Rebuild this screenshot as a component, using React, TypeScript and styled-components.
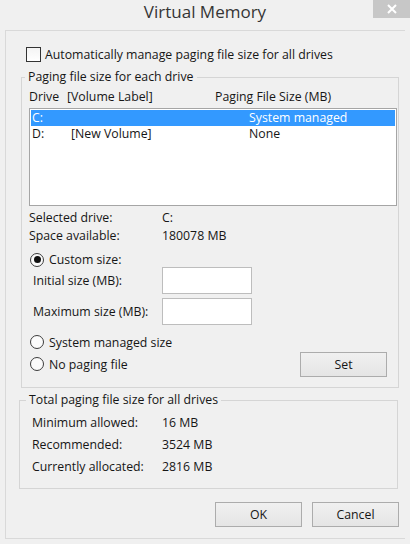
import React from 'react';
import styled, { createGlobalStyle } from 'styled-components';

const GlobalStyle = createGlobalStyle`
  html, body {
    margin: 0;
    padding: 0;
    background: #f0f0f0;
  }
  body {
    font-family: 'Open Sans', 'Noto Sans', sans-serif;
    font-size: 12.3px;
    color: #161616;
  }
  * {
    box-sizing: border-box;
  }
`;

const Window = styled.div`
  width: 410px;
  height: 544px;
  background: #f0f0f0;
  overflow: hidden;
`;

const TitleBar = styled.div`
  height: 30px;
  display: grid;
  grid-template-columns: 1fr auto 1fr;
  align-items: start;
`;

const Title = styled.div`
  grid-column: 2;
  font-size: 17px;
  line-height: 24px;
  color: #353535;
`;

const CloseButton = styled.div`
  grid-column: 3;
  justify-self: end;
  width: 37px;
  height: 18px;
  background: #c7c7c7;
  display: flex;
  align-items: center;
  justify-content: center;
`;

const Client = styled.div`
  margin-left: 5px;
  width: 400px;
  height: 509px;
  border: 1px solid #d9d9d9;
  border-right: none;
  display: flex;
  flex-direction: column;
`;

const CheckRow = styled.label`
  display: flex;
  align-items: center;
  gap: 4px;
  height: 15px;
  margin: 16px 0 0 20px;
  line-height: 15px;
`;

const CheckBox = styled.span`
  width: 15px;
  height: 15px;
  border: 1px solid #333;
  background: linear-gradient(#f4f4f4, #ffffff);
`;

const Group = styled.fieldset<{ $left: number; $width: number; $top: number }>`
  margin: ${({ $top }) => $top}px 0 0 ${({ $left }) => $left}px;
  width: ${({ $width }) => $width}px;
  padding: 0;
  min-inline-size: 0;
  border: 1px solid #d5d5d5;
`;

const Legend = styled.legend<{ $indent: number }>`
  margin-left: ${({ $indent }) => $indent}px;
  padding: 0 3px;
  line-height: 16px;
`;

const DriveBody = styled.div`
  padding: 4px 1px 10px 7px;
  display: flex;
  flex-direction: column;
`;

const ColumnHeader = styled.div`
  display: grid;
  grid-template-columns: 38px 148px 1fr;
  line-height: 16px;
`;

const ListBox = styled.div`
  margin-top: 3px;
  height: 98px;
  border: 1px solid #a5a5a5;
  background: #fff;
  padding: 1px;
`;

const ListRow = styled.div<{ $selected?: boolean }>`
  display: grid;
  grid-template-columns: 39px 178px 1fr;
  height: 16px;
  line-height: 16px;
  padding-left: 1px;
  background: ${({ $selected }) => ($selected ? '#3399ff' : 'transparent')};
  color: ${({ $selected }) => ($selected ? '#fff' : 'inherit')};
`;

const InfoGrid = styled.div`
  margin-top: 3px;
  display: grid;
  grid-template-columns: 133px 1fr;
  grid-auto-rows: 18px;
  line-height: 18px;
`;

const RadioRow = styled.label<{ $height?: number }>`
  display: flex;
  align-items: center;
  gap: 5px;
  height: ${({ $height }) => $height ?? 16}px;
  padding-left: 1px;
`;

const RadioCircle = styled.span<{ $checked?: boolean }>`
  width: 14px;
  height: 14px;
  border-radius: 50%;
  border: 1px solid #3c3c3c;
  background: #fbfbfb;
  display: flex;
  align-items: center;
  justify-content: center;

  &::after {
    content: '';
    width: 7px;
    height: 7px;
    border-radius: 50%;
    background: ${({ $checked }) => ($checked ? '#111' : 'transparent')};
  }
`;

const CustomBlock = styled.div`
  margin-top: 7px;
  display: flex;
  flex-direction: column;
`;

const SizeGrid = styled.div`
  display: grid;
  grid-template-columns: 129px 90px;
  grid-auto-rows: 27px;
  row-gap: 4px;
  padding-left: 4px;
  align-items: center;
`;

const TextBox = styled.div`
  height: 27px;
  border: 1px solid #bdbdbd;
  background: #fff;
`;

const BottomRow = styled.div`
  margin-top: 9px;
  display: flex;
  justify-content: space-between;
  align-items: flex-start;
`;

const RadioColumn = styled.div`
  display: flex;
  flex-direction: column;
  gap: 6px;
`;

const Button = styled.button<{ $width?: number }>`
  width: ${({ $width }) => $width ?? 87}px;
  height: 25px;
  border: 1px solid #acacac;
  background: linear-gradient(#f0f0f0, #e5e5e5);
  font-family: inherit;
  font-size: 12.3px;
  color: #161616;
  padding: 0;
`;

const SetButton = styled(Button)`
  margin-top: 18px;
  margin-right: 10px;
`;

const TotalBody = styled.div`
  padding: 4px 0 10px 12px;
  display: grid;
  grid-template-columns: 130px 1fr;
  grid-auto-rows: 22px;
  line-height: 22px;
`;

const Footer = styled.div`
  margin: 13px 6px 0 0;
  display: flex;
  justify-content: flex-end;
  gap: 10px;
`;

const drives = [
  { drive: 'C:', label: '', size: 'System managed', selected: true },
  { drive: 'D:', label: '[New Volume]', size: 'None', selected: false },
];

const totals = [
  ['Minimum allowed:', '16 MB'],
  ['Recommended:', '3524 MB'],
  ['Currently allocated:', '2816 MB'],
];

export default function App() {
  return (
    <>
      <GlobalStyle />
      <Window>
        <TitleBar>
          <Title>Virtual Memory</Title>
          <CloseButton>
            <svg width="10" height="10" viewBox="0 0 10 10">
              <path d="M1 1 L9 9 M9 1 L1 9" stroke="#fff" strokeWidth="2" />
            </svg>
          </CloseButton>
        </TitleBar>
        <Client>
          <CheckRow>
            <CheckBox />
            Automatically manage paging file size for all drives
          </CheckRow>

          <Group $left={15} $width={378} $top={7}>
            <Legend $indent={3}>Paging file size for each drive</Legend>
            <DriveBody>
              <ColumnHeader>
                <span>Drive</span>
                <span>[Volume Label]</span>
                <span>Paging File Size (MB)</span>
              </ColumnHeader>
              <ListBox>
                {drives.map((d) => (
                  <ListRow key={d.drive} $selected={d.selected}>
                    <span>{d.drive}</span>
                    <span>{d.label}</span>
                    <span>{d.size}</span>
                  </ListRow>
                ))}
              </ListBox>
              <InfoGrid>
                <span>Selected drive:</span>
                <span>C:</span>
                <span>Space available:</span>
                <span>180078 MB</span>
              </InfoGrid>
              <CustomBlock>
                <RadioRow $height={15}>
                  <RadioCircle $checked />
                  Custom size:
                </RadioRow>
                <SizeGrid>
                  <span>Initial size (MB):</span>
                  <TextBox />
                  <span>Maximum size (MB):</span>
                  <TextBox />
                </SizeGrid>
              </CustomBlock>
              <BottomRow>
                <RadioColumn>
                  <RadioRow>
                    <RadioCircle />
                    System managed size
                  </RadioRow>
                  <RadioRow>
                    <RadioCircle />
                    No paging file
                  </RadioRow>
                </RadioColumn>
                <SetButton>Set</SetButton>
              </BottomRow>
            </DriveBody>
          </Group>

          <Group $left={13} $width={379} $top={4}>
            <Legend $indent={6}>Total paging file size for all drives</Legend>
            <TotalBody>
              {totals.map(([label, value]) => (
                <React.Fragment key={label}>
                  <span>{label}</span>
                  <span>{value}</span>
                </React.Fragment>
              ))}
            </TotalBody>
          </Group>

          <Footer>
            <Button>OK</Button>
            <Button>Cancel</Button>
          </Footer>
        </Client>
      </Window>
    </>
  );
}
